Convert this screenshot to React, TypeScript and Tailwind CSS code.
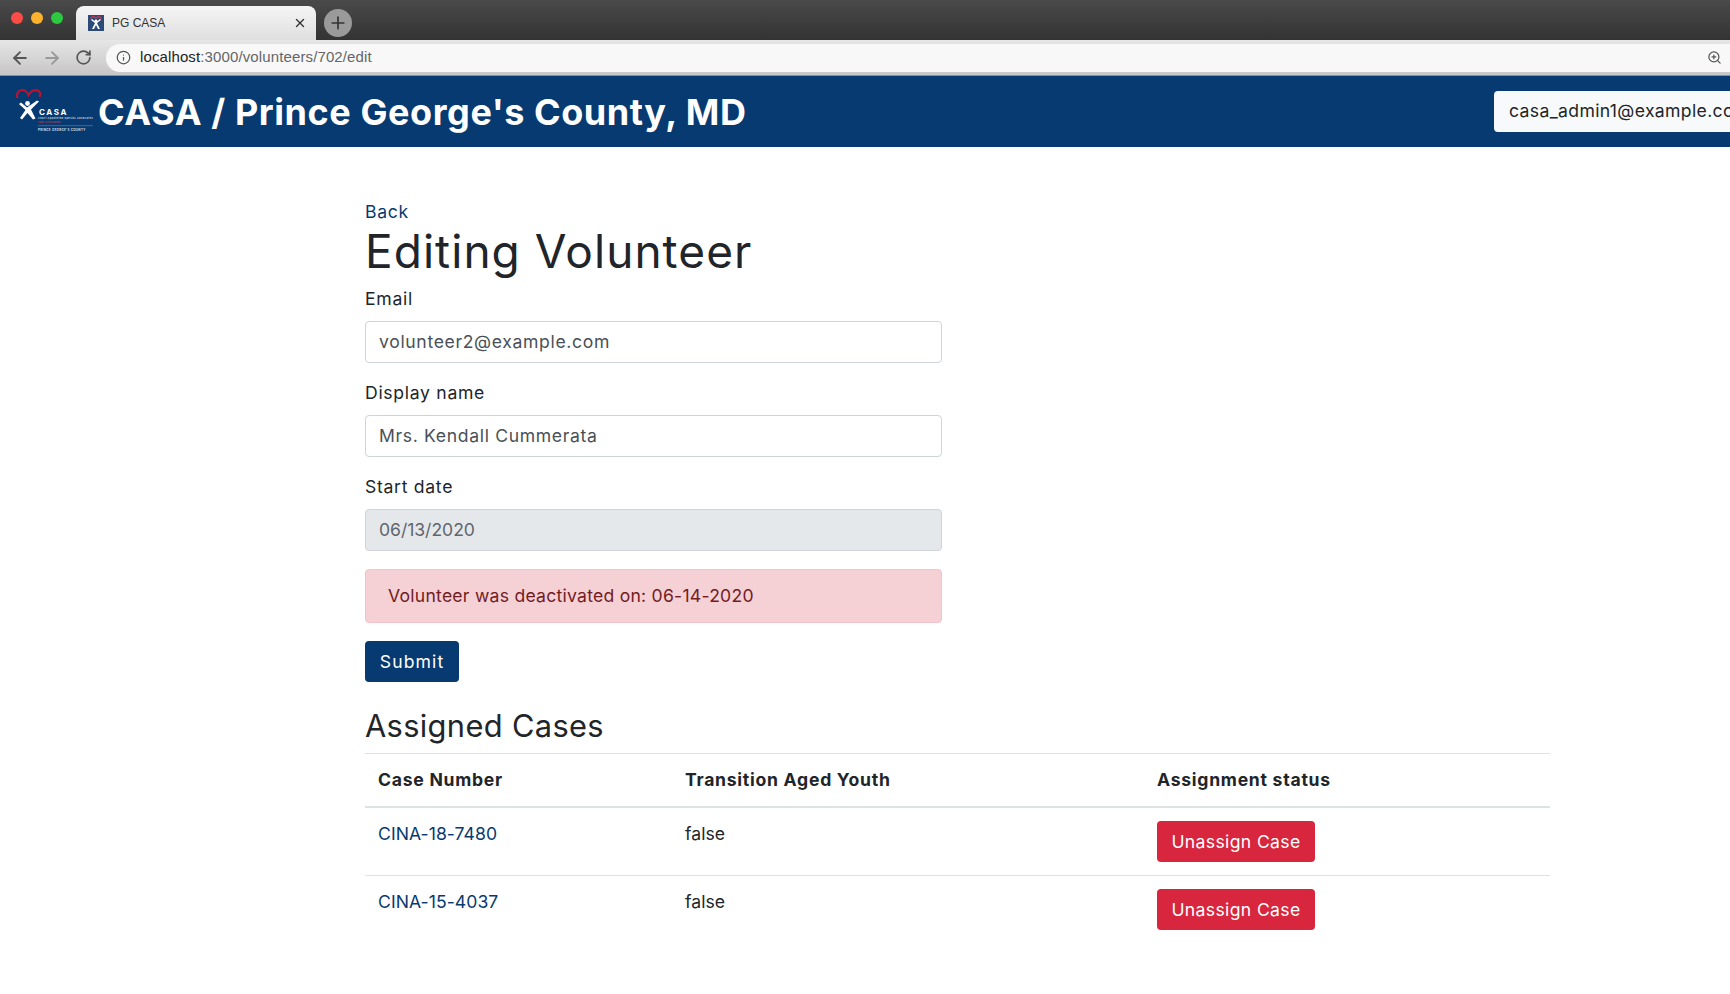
import { ArrowLeft, ArrowRight, RotateCw, Info, ZoomIn, X, Plus } from "lucide-react";

function Logo() {
  return (
    <svg width="78" height="50" viewBox="0 0 78 50" className="shrink-0">
      <path d="M1.5 11C-0.5 5 5 1.5 9.5 4C11 5 12 6.5 12.5 8C14.5 4.5 18 2.5 21.5 3.5C24.5 4.5 25 7.5 23.5 10" fill="none" stroke="#c8102e" strokeWidth="2" />
      <circle cx="11.5" cy="16.5" r="2.4" fill="#fff" />
      <path d="M3 17L5 15.5L11 20.5L21 13.5L23 14.5L15 22.5L19.5 31.5L17 32.5L11.5 26L6 32.5L4 31L9.5 23Z" fill="#fff" />
      <text x="23" y="28" fill="#fff" fontSize="8" fontWeight="700" fontFamily="Inter, sans-serif" letterSpacing="1.6">CASA</text>
      <text x="22" y="32" fill="#c9d3df" fontSize="2.5" fontWeight="700" fontFamily="Inter, sans-serif">Court Appointed Special Advocates</text>
      <text x="22" y="36" fill="#d0324a" fontSize="2.6" fontWeight="700" fontFamily="Inter, sans-serif" letterSpacing="0.3">FOR CHILDREN</text>
      <rect x="22" y="38.5" width="55" height="0.6" fill="#6d86a4" />
      <text x="22" y="43.5" fill="#d5dde7" fontSize="3" fontWeight="700" fontFamily="Inter, sans-serif" letterSpacing="0.3">PRINCE GEORGE'S COUNTY</text>
    </svg>
  );
}

function Favicon() {
  return (
    <svg width="16" height="16" viewBox="0 0 16 16" className="shrink-0">
      <rect width="16" height="16" fill="#2b4a78" />
      <path d="M3 4C3 1 6 1 8 3C10 1 13 1 13 4" fill="none" stroke="#d23a4a" strokeWidth="1.2" />
      <circle cx="8" cy="6" r="1.4" fill="#fff" />
      <path d="M3 5L7 8L4 14L6 14L8 10L10 14L12 14L9 8L13 5L12 4L8 7L4 4Z" fill="#fff" />
    </svg>
  );
}

function Field({ label, value, disabled, mb }: { label: string; value: string; disabled?: boolean; mb: string }) {
  return (
    <div className={mb}>
      <div className="h-[26px] leading-[26px] mb-[9px] tracking-[0.7px]">{label}</div>
      <div
        className={
          "h-[42px] rounded-[4px] border border-[#ced4da] px-[13px] flex items-center " +
          (disabled ? "bg-[#e5e8eb] text-[#5f666d] tracking-[-0.05px]" : "bg-white text-[#495057] tracking-[0.65px]")
        }
      >
        {value}
      </div>
    </div>
  );
}

function CaseRow({ id }: { id: string }) {
  return (
    <div className="grid grid-cols-[307px_472px_1fr] border-t border-[#dee2e6] h-[68px] pt-[13px]">
      <div className="pl-[13px] leading-[26px] text-[#073a70] tracking-[0.05px]">{id}</div>
      <div className="pl-[13px] leading-[26px] tracking-[0.05px]">false</div>
      <div className="pl-[13px]">
        <div className="w-[158px] h-[41px] pt-px rounded-[4px] bg-[#d7263d] text-white flex items-center justify-center">Unassign Case</div>
      </div>
    </div>
  );
}

export default function App() {
  return (
    <div className="h-[994px] w-[1730px] overflow-hidden bg-white text-[17.6px] text-[#212529] font-['Inter',sans-serif] tracking-[0.35px]">
      {/* browser tab strip */}
      <div className="h-[40px] bg-gradient-to-b from-[#4a4a4a] to-[#333333] flex items-end font-['Liberation_Sans',sans-serif] tracking-normal">
        <div className="w-[76px] h-[40px] flex items-center pl-[11px] gap-[8px] pb-[4px]">
          <span className="w-[12px] h-[12px] rounded-full bg-[#fc4c48]" />
          <span className="w-[12px] h-[12px] rounded-full bg-[#fdb22d]" />
          <span className="w-[12px] h-[12px] rounded-full bg-[#2bc840]" />
        </div>
        <div className="w-[240px] h-[34px] rounded-t-[8px] bg-gradient-to-b from-[#f5f5f5] to-[#dfdfdf] flex items-center pl-[12px] pr-[9px] gap-[8px]">
          <Favicon />
          <span className="text-[12px] text-[#333] flex-1">PG CASA</span>
          <X size={14} strokeWidth={2.4} className="text-[#333]" />
        </div>
        <div className="ml-[8px] mb-[3px] w-[28px] h-[28px] rounded-full bg-[#9a9a9a] flex items-center justify-center">
          <Plus size={20} strokeWidth={2} className="text-[#333]" />
        </div>
      </div>
      {/* browser toolbar */}
      <div className="h-[36px] bg-gradient-to-b from-[#e6e6e6] to-[#c6c6c6] border-b border-[#8f8f8f] flex items-center font-['Liberation_Sans',sans-serif] tracking-normal">
        <div className="w-[106px] flex items-center pl-[10px] gap-[12px]">
          <ArrowLeft size={20} strokeWidth={2.2} className="text-[#555]" />
          <ArrowRight size={20} strokeWidth={2.2} className="text-[#999]" />
          <RotateCw size={17} strokeWidth={2.4} className="text-[#555] ml-px" />
        </div>
        <div className="flex-1 h-[28px] rounded-l-[14px] bg-[#f8f8f8] flex items-center pl-[10px] pr-[8px] text-[15px] tracking-[0.12px]">
          <Info size={15} strokeWidth={2} className="text-[#555] mr-[9px]" />
          <span className="text-[#222]">localhost</span>
          <span className="text-[#666]">:3000/volunteers/702/edit</span>
          <ZoomIn size={15} strokeWidth={2} className="text-[#555] ml-auto" />
        </div>
      </div>
      {/* app header */}
      <div className="h-[71px] bg-[#073a70] flex items-center pl-[16px] overflow-hidden">
        <Logo />
        <div className="ml-[4px] text-white text-[36px] font-bold tracking-[0.57px] whitespace-nowrap">CASA / Prince George's County, MD</div>
        <div className="ml-auto w-[236px] shrink-0 h-[41px] bg-[#f8f9fa] rounded-l-[4px] flex items-center pl-[15px] whitespace-nowrap overflow-hidden">casa_admin1@example.com</div>
      </div>
      {/* content */}
      <div className="pl-[365px] pr-[180px] pt-[52px]">
        <div className="h-[26px] leading-[26px] text-[#073a70] tracking-[0.7px]">Back</div>
        <h1 className="text-[46px] leading-[53px] mb-[8px] font-normal tracking-[1.05px]">Editing Volunteer</h1>
        <div className="w-[577px]">
          <Field label="Email" value="volunteer2@example.com" mb="mb-[17px]" />
          <Field label="Display name" value="Mrs. Kendall Cummerata" mb="mb-[17px]" />
          <Field label="Start date" value="06/13/2020" disabled mb="mb-[18px]" />
          <div className="h-[54px] rounded-[4px] bg-[#f5d0d5] border border-[#f2c3c9] text-[#721c24] flex items-center pl-[22px] mb-[18px] tracking-[0.24px]">
            Volunteer was deactivated on: 06-14-2020
          </div>
          <div className="w-[94px] h-[41px] pt-px rounded-[4px] bg-[#073a70] text-white flex items-center justify-center tracking-[1.1px]">Submit</div>
        </div>
        <h3 className="text-[30.8px] leading-[37px] mt-[25px] mb-[9px] font-normal">Assigned Cases</h3>
        <div className="border-t border-[#dee2e6]">
          <div className="grid grid-cols-[307px_472px_1fr] h-[54px] border-b-2 border-[#dee2e6] items-center font-bold tracking-[0.73px]">
            <div className="pl-[13px]">Case Number</div>
            <div className="pl-[13px]">Transition Aged Youth</div>
            <div className="pl-[13px]">Assignment status</div>
          </div>
          <div className="-mt-px">
            <CaseRow id="CINA-18-7480" />
            <CaseRow id="CINA-15-4037" />
          </div>
        </div>
      </div>
    </div>
  );
}
